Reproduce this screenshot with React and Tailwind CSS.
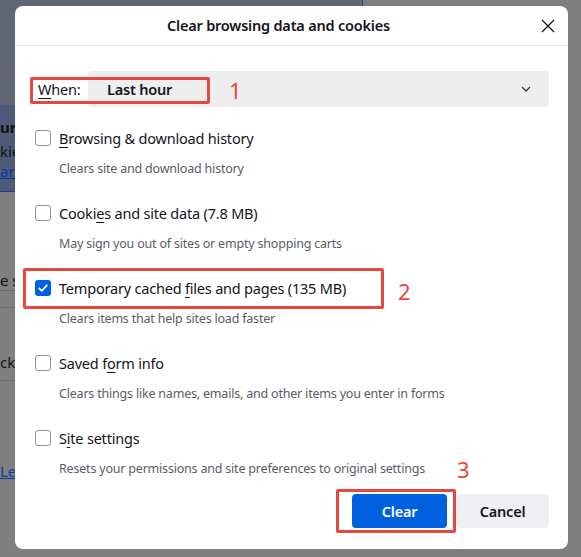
import React from "react";

const font = { fontFamily: '"Noto Sans", "Open Sans", Arial, sans-serif' };

function U({ children }) {
  return <span className="underline underline-offset-[3px] decoration-1">{children}</span>;
}

function Check({ checked }) {
  if (checked) {
    return (
      <span className="w-[16px] h-[16px] rounded-[3px] bg-[#0061e0] flex items-center justify-center shrink-0">
        <svg width="12" height="12" viewBox="0 0 12 12" fill="none">
          <path d="M2.2 6.3 L4.8 8.8 L9.8 3.4" stroke="white" strokeWidth="1.8" strokeLinecap="round" strokeLinejoin="round" />
        </svg>
      </span>
    );
  }
  return <span className="w-[16px] h-[16px] rounded-[3px] border border-[#8f8f9d] bg-white shrink-0" />;
}

function Item({ checked, label, desc }) {
  return (
    <div className="flex flex-col h-[52px]">
      <div className="flex items-center h-[24px] gap-[8px]">
        <Check checked={checked} />
        <span className="text-[14.5px] tracking-[-0.2px] text-[#15141a] leading-[24px]">{label}</span>
      </div>
      <div className="mt-[9px] pl-[24px] text-[12.5px] tracking-[-0.2px] leading-[20px] text-[#5b5b66]">{desc}</div>
    </div>
  );
}

export default function App() {
  return (
    <div className="relative w-[581px] h-[557px] overflow-hidden bg-[#7f7f7f]" style={font}>
      {/* dimmed page behind */}
      <div className="flex flex-col w-[363px] h-full">
        <div className="h-[105px] bg-[#5f6674] border-r border-[#2b4a8a]" />
        <div className="h-[87px] bg-[#4d5b78] border-b border-[#1f3d80] flex flex-col pt-[12px]">
          <span className="text-[15px] font-bold text-[#111] leading-[20px]">ur</span>
          <span className="text-[15px] text-[#111] leading-[20px] mt-[4px]">kie</span>
          <span className="text-[15px] text-[#0a3aa0] underline leading-[20px]">arn</span>
        </div>
        <div className="h-[78px]" />
        <span className="text-[15px] text-[#111] leading-[20px]">e s</span>
        <div className="border-b border-[#6b6b6b] h-[1px]" />
        <div className="h-[17px] border-b border-[#6b6b6b]" />
        <div className="h-[44px]" />
        <span className="text-[15px] text-[#111] leading-[20px]">ck</span>
        <div className="h-[9px] border-b border-[#6b6b6b]" />
        <div className="h-[80px]" />
        <span className="text-[15px] text-[#0a3aa0] underline leading-[20px]">Lea</span>
      </div>

      {/* dialog */}
      <div className="absolute left-[15px] top-[6px] w-[553px] h-[543px] bg-white rounded-[8px] flex flex-col">
        <div className="relative h-[40px] border-b border-[#e0e0e6] flex items-center justify-center pr-[26px]">
          <span className="text-[14.5px] tracking-[-0.2px] font-semibold text-[#15141a] mt-[1px]">Clear browsing data and cookies</span>
          <svg className="absolute right-[13px] top-[13px]" width="14" height="14" viewBox="0 0 14 14">
            <path d="M1 1 L13 13 M13 1 L1 13" stroke="#15141a" strokeWidth="1.3" />
          </svg>
        </div>

        <div className="flex flex-col pl-[20px] pr-[19px]">
          <div className="mt-[25px] flex items-center h-[36px]">
            <span className="w-[53px] pl-[3px] text-[14.5px] tracking-[-0.2px] text-[#15141a] mt-[1px]">
              <U>W</U>hen:
            </span>
            <div className="flex-1 h-[36px] bg-[#eeeeee] rounded-[4px] flex items-center justify-between pl-[19px] pr-[18px]">
              <span className="text-[14.5px] tracking-[-0.2px] font-semibold text-[#15141a] mt-[1px]">Last hour</span>
              <svg width="10" height="6" viewBox="0 0 10 6">
                <path d="M1 1 L5 5 L9 1" stroke="#3a3a44" strokeWidth="1.3" fill="none" />
              </svg>
            </div>
          </div>

          <div className="mt-[19px] flex flex-col gap-[23px]">
            <Item label={<><U>B</U>rowsing &amp; download history</>} desc="Clears site and download history" />
            <Item label={<>Cooki<U>e</U>s and site data (7.8 MB)</>} desc="May sign you out of sites or empty shopping carts" />
            <Item checked label={<>Temporary cached <U>f</U>iles and pages (135 MB)</>} desc="Clears items that help sites load faster" />
            <Item label={<>Saved f<U>o</U>rm info</>} desc="Clears things like names, emails, and other items you enter in forms" />
            <Item label={<>S<U>i</U>te settings</>} desc="Resets your permissions and site preferences to original settings" />
          </div>

          <div className="mt-[16px] flex justify-end gap-[9px]">
            <button className="w-[95px] h-[34px] rounded-[4px] bg-[#0061e0] text-white text-[14.5px] tracking-[-0.2px] font-semibold pt-[1px]">Clear</button>
            <button className="w-[93px] h-[34px] rounded-[4px] bg-[#f0f0f4] text-[#15141a] text-[14.5px] tracking-[-0.2px] font-semibold pt-[1px]">Cancel</button>
          </div>
        </div>
      </div>

      {/* annotations */}
      <div className="absolute left-[30px] top-[77px] w-[180px] h-[27px] border-[3px] border-[#e8473f] rounded-[2px]" />
      <span className="absolute left-[229px] top-[77px] text-[22px] leading-[26px] text-[#e8473f]">1</span>
      <div className="absolute left-[23px] top-[268px] w-[361px] h-[41px] border-[3px] border-[#e8473f] rounded-[2px]" />
      <span className="absolute left-[398px] top-[278px] text-[22px] leading-[26px] text-[#e8473f]">2</span>
      <div className="absolute left-[336px] top-[489px] w-[120px] h-[44px] border-[3px] border-[#e8473f] rounded-[2px]" />
      <span className="absolute left-[457px] top-[456px] text-[22px] leading-[26px] text-[#e8473f]">3</span>
    </div>
  );
}
